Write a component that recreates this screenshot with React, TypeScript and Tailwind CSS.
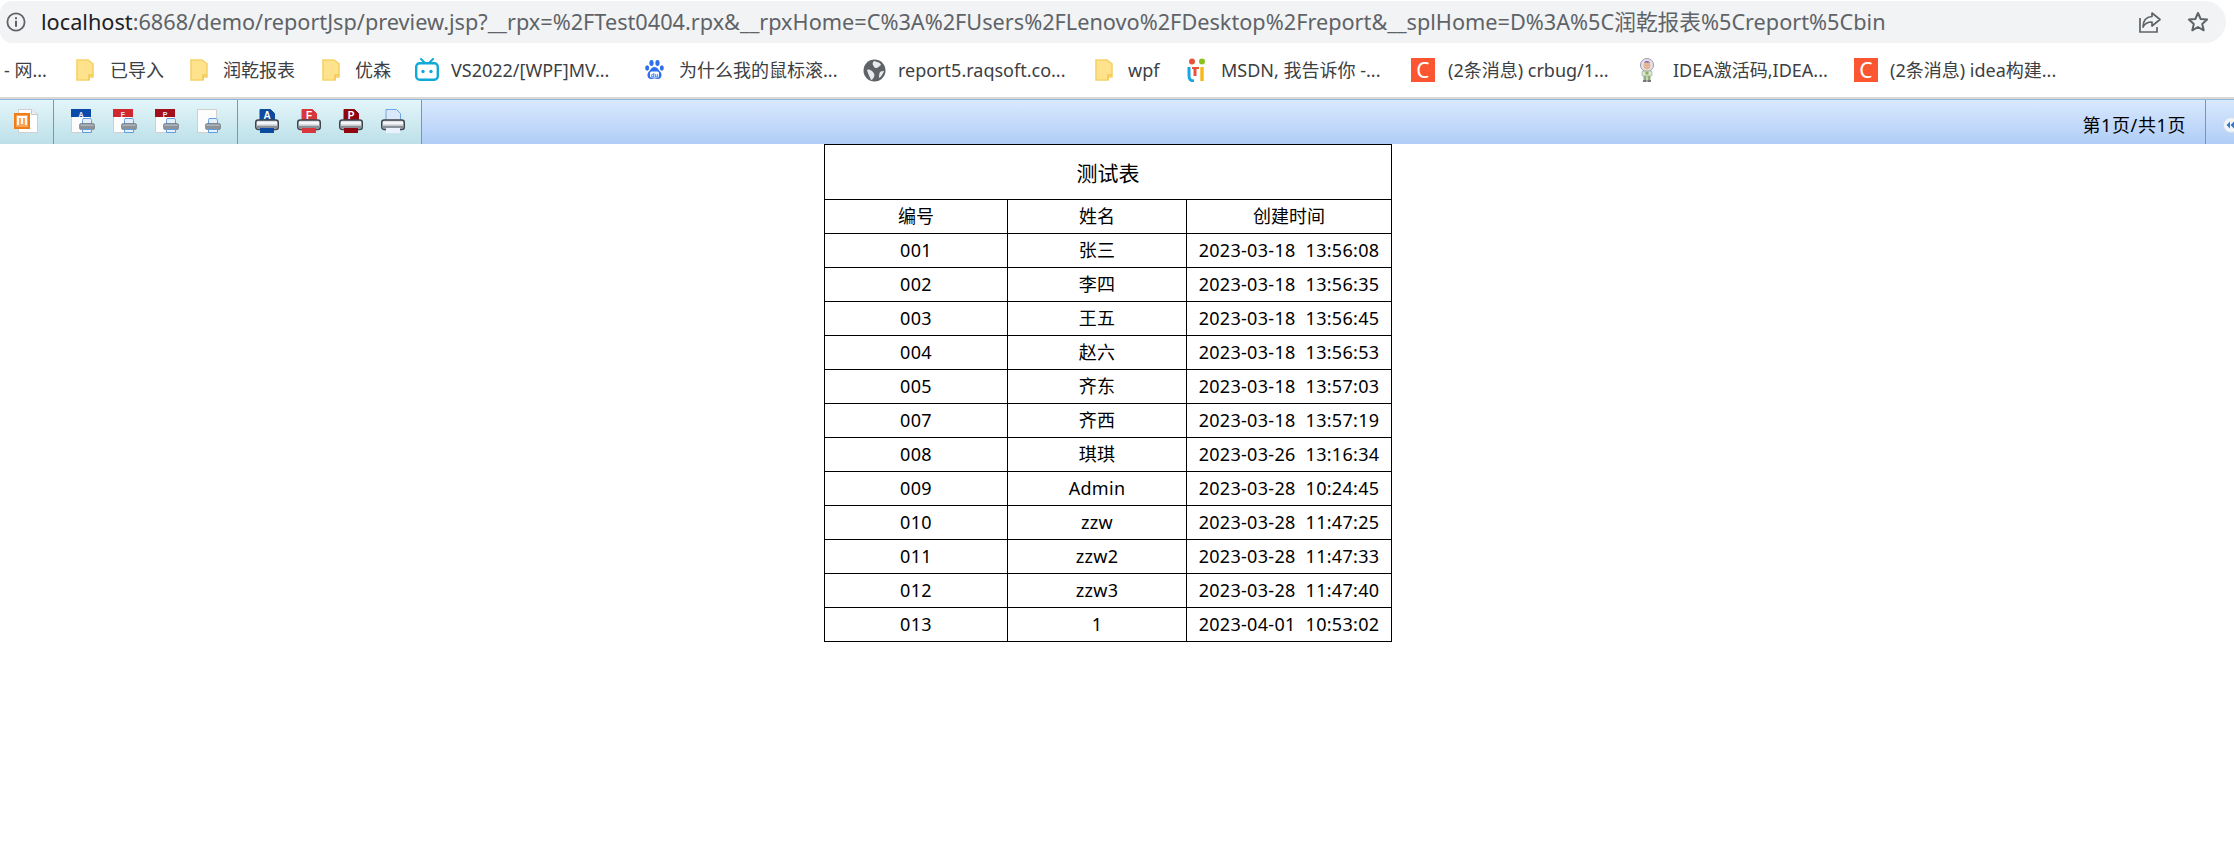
import type { ReactNode } from "react";

const sans = "font-['Noto_Sans','Noto_Sans_CJK_SC',sans-serif]";

function Folder() {
  return (
    <svg width="18" height="22" viewBox="0 0 18 22">
      <path d="M1 1h11l5 4v13h-4v3H1z" fill="#ffe38c" stroke="#f6d267" strokeWidth="1.6" />
      <path d="M13 21v-5h4" fill="none" stroke="#f1c955" strokeWidth="1.4" />
    </svg>
  );
}

function Bili() {
  return (
    <svg width="24" height="24" viewBox="0 0 24 24">
      <path d="M6 1l4 4M18 1l-4 4" stroke="#0fa9d8" strokeWidth="2" strokeLinecap="round" />
      <rect x="1.2" y="5.2" width="21.6" height="16.6" rx="3.5" fill="#fff" stroke="#0fa9d8" strokeWidth="2.4" />
      <circle cx="8" cy="13.5" r="1.7" fill="#0fa9d8" />
      <circle cx="16" cy="13.5" r="1.7" fill="#0fa9d8" />
    </svg>
  );
}

function Baidu() {
  return (
    <svg width="19" height="22" viewBox="0 0 19 22">
      <ellipse cx="6.5" cy="4" rx="2.1" ry="3" fill="#2f6fed" />
      <ellipse cx="12.5" cy="4" rx="2.1" ry="3" fill="#2f6fed" />
      <ellipse cx="2.2" cy="9" rx="2" ry="2.7" fill="#2f6fed" />
      <ellipse cx="16.8" cy="9" rx="2" ry="2.7" fill="#2f6fed" />
      <path d="M9.5 8c3 0 4 3 6 5 2 2.500 1 7-2.500 7-1.500 0-2-.5-3.500-.5S7.500 20 6 20c-3.500 0-4.500-4.500-2.500-7 2-2 3-5 6-5z" fill="#2f6fed" />
      <rect x="5" y="12.500" width="9" height="6" rx="1.500" fill="#fff" />
      <text x="9.500" y="17.800" textAnchor="middle" fontSize="6" fontWeight="700" fill="#2f6fed" fontFamily="Liberation Sans">du</text>
    </svg>
  );
}

function Globe() {
  return (
    <svg width="23" height="23" viewBox="0 0 23 23">
      <circle cx="11.500" cy="11.500" r="11" fill="#5f6368" />
      <path d="M11 2c3 1 6 1 7 4-2 1-3 3-5 3s-2-2-3-3 0-3 1-4zM4 11c2-1 4 0 6 2 1 1 2 3 1 5-1 2-2 3-3 3-1-3-3-6-4-10zM17 13c1-1 3-1 4-1-1 3-3 6-5 7 0-2 0-4 1-6z" fill="#e8eaed" />
    </svg>
  );
}

function UiLogo() {
  return (
    <svg width="20" height="24" viewBox="0 0 20 24">
      <circle cx="5" cy="3.500" r="3" fill="#e8533a" />
      <circle cx="15" cy="3.500" r="3" fill="#8cc220" />
      <path d="M2 9v9c0 3 2 5 5 5" fill="none" stroke="#1aa6e0" strokeWidth="3" />
      <path d="M8 9v9" stroke="#e8533a" strokeWidth="3" />
      <path d="M5 10h7" stroke="#e8533a" strokeWidth="2" />
      <path d="M15 9v14" stroke="#f6b818" strokeWidth="3.400" />
    </svg>
  );
}

function CLogo() {
  return (
    <span className="flex h-[24px] w-[24px] items-center justify-center bg-[#fc5531] font-['Noto_Sans',sans-serif] text-[21px] leading-none text-white">
      C
    </span>
  );
}

function Buzz() {
  return (
    <svg width="16" height="24" viewBox="0 0 16 24">
      <circle cx="8" cy="7" r="6.500" fill="#e7e3ee" stroke="#9a94a8" strokeWidth="1" />
      <ellipse cx="8" cy="7.500" rx="3.500" ry="4" fill="#e3b795" />
      <path d="M5 4.500c1-2 5-2 6 0z" fill="#8a5fa8" />
      <rect x="3" y="13" width="10" height="5" rx="1" fill="#dfe6d8" stroke="#8c9c80" strokeWidth=".6" />
      <rect x="6.500" y="13.500" width="3" height="3" fill="#7fb05a" />
      <rect x="4.500" y="18" width="3" height="5.500" fill="#8fb07a" />
      <rect x="8.500" y="18" width="3" height="5.500" fill="#8fb07a" />
      <rect x="4" y="22" width="3.500" height="2" fill="#777" />
      <rect x="8.500" y="22" width="3.500" height="2" fill="#777" />
    </svg>
  );
}

function ExcelPage() {
  return (
    <svg width="24" height="24" viewBox="0 0 24 24">
      <path d="M4.500.5h13l6 4.500v18.500h-19z" fill="#fff" stroke="#cfcfcf" />
      <path d="M17.500.5v5h6" fill="#eee" stroke="#c8c8c8" />
      <rect x="1" y="5" width="14" height="14" fill="#fba55b" stroke="#ef7d1a" strokeWidth="2" />
      <path d="M4 16v-8h8v8M8 8v7" fill="none" stroke="#fff" strokeWidth="1.800" />
    </svg>
  );
}

function SmallPrinter({ x = 8, y = 9 }: { x?: number; y?: number }) {
  return (
    <g transform={`translate(${x} ${y})`}>
      <path d="M4 .5h7c1 0 1.500 1 1.500 2V6h-9V2.500c0-1 .5-2 .5-2z" fill="#e4effb" stroke="#5d9de0" />
      <rect x=".5" y="5.500" width="15" height="6" rx="1.500" fill="#8b9299" stroke="#6d7379" strokeWidth=".6" />
      <rect x="1.500" y="6.500" width="13" height="1.500" fill="#aeb4ba" />
      <path d="M3.500 11.500h9v3h-9z" fill="#e9f2fc" stroke="#5d9de0" />
    </g>
  );
}

function DocPrint({ color, letter }: { color?: string; letter?: string }) {
  return (
    <svg width="24" height="24" viewBox="0 0 24 24">
      <path d="M.5.500h19v23H.5z" fill="#fdfdfd" stroke="#cfcfcf" />
      {color && <rect x="0" y="0" width="20" height="8" fill={color} />}
      {letter && (
        <text x="10" y="7.500" textAnchor="middle" fontSize="7" fontWeight="700" fill="#e8eef8" fontFamily="Liberation Sans">
          {letter}
        </text>
      )}
      <SmallPrinter />
    </svg>
  );
}

function BigPrinter({ color, letter, tray }: { color: string; letter?: string; tray: string }) {
  return (
    <svg width="24" height="24" viewBox="0 0 24 24">
      <path d="M5 .500h10.500l4 4V13H5z" fill={color} stroke={letter ? color : "#6ea5e4"} />
      {letter && (
        <text x="12" y="9.800" textAnchor="middle" fontSize="10" fontWeight="700" fill="#fff" fontFamily="Liberation Sans">
          {letter}
        </text>
      )}
      <rect x=".7" y="11" width="22.600" height="9.500" rx="2.500" fill="#c4c9ce" stroke="#3e444c" strokeWidth="1.400" />
      <rect x="2" y="12.500" width="20" height="3" fill="#f4f6f8" />
      <rect x="2" y="17" width="20" height="2.500" fill="#8a9098" />
      <path d="M5 19h14v5H5z" fill={tray} />
    </svg>
  );
}

const bookmarks: { icon?: ReactNode; iconBox: string; label: string; labelBox: string }[] = [
  { iconBox: "w-[4px]", label: "- 网...", labelBox: "w-[72px]" },
  { icon: <Folder />, iconBox: "w-[34px]", label: "已导入", labelBox: "w-[80px]" },
  { icon: <Folder />, iconBox: "w-[33px]", label: "润乾报表", labelBox: "w-[99px]" },
  { icon: <Folder />, iconBox: "w-[33px]", label: "优森", labelBox: "w-[60px]" },
  { icon: <Bili />, iconBox: "w-[36px]", label: "VS2022/[WPF]MV...", labelBox: "w-[194px]" },
  { icon: <Baidu />, iconBox: "w-[34px]", label: "为什么我的鼠标滚...", labelBox: "w-[184px]" },
  { icon: <Globe />, iconBox: "w-[35px]", label: "report5.raqsoft.co...", labelBox: "w-[197px]" },
  { icon: <Folder />, iconBox: "w-[33px]", label: "wpf", labelBox: "w-[59px]" },
  { icon: <UiLogo />, iconBox: "w-[34px]", label: "MSDN, 我告诉你 -...", labelBox: "w-[190px]" },
  { icon: <CLogo />, iconBox: "w-[37px]", label: "(2条消息) crbug/1...", labelBox: "w-[191px]" },
  { icon: <Buzz />, iconBox: "w-[34px]", label: "IDEA激活码,IDEA...", labelBox: "w-[181px]" },
  { icon: <CLogo />, iconBox: "w-[36px]", label: "(2条消息) idea构建...", labelBox: "w-[180px]" },
];

const rows = [
  ["001", "张三", "2023-03-18  13:56:08"],
  ["002", "李四", "2023-03-18  13:56:35"],
  ["003", "王五", "2023-03-18  13:56:45"],
  ["004", "赵六", "2023-03-18  13:56:53"],
  ["005", "齐东", "2023-03-18  13:57:03"],
  ["007", "齐西", "2023-03-18  13:57:19"],
  ["008", "琪琪", "2023-03-26  13:16:34"],
  ["009", "Admin", "2023-03-28  10:24:45"],
  ["010", "zzw", "2023-03-28  11:47:25"],
  ["011", "zzw2", "2023-03-28  11:47:33"],
  ["012", "zzw3", "2023-03-28  11:47:40"],
  ["013", "1", "2023-04-01  10:53:02"],
];

const cell = "h-[34px] border border-black p-0 pb-[1px] text-center align-middle whitespace-pre";

export default function App() {
  return (
    <div className={`h-[861px] w-[2234px] overflow-hidden bg-white ${sans}`}>
      {/* address bar */}
      <div className="mt-px flex h-[42px] w-[2226px] items-center rounded-l-[12px] rounded-r-[21px] bg-[#f1f3f4]">
        <svg className="ml-[6px] shrink-0" width="20" height="20" viewBox="0 0 20 20">
          <circle cx="10" cy="10" r="8.600" fill="none" stroke="#5f6368" strokeWidth="1.800" />
          <rect x="9" y="8.800" width="2" height="6" fill="#5f6368" />
          <rect x="9" y="5.200" width="2" height="2" fill="#5f6368" />
        </svg>
        <div className="ml-[15px] flex-1 whitespace-nowrap text-[21.7px] leading-none text-[#5f6368]">
          <span className="text-[#202124]">localhost</span>
          :6868/demo/reportJsp/preview.jsp?__rpx=%2FTest0404.rpx&amp;__rpxHome=C%3A%2FUsers%2FLenovo%2FDesktop%2Freport&amp;__splHome=D%3A%5C润乾报表%5Creport%5Cbin
        </div>
        <svg className="mr-[25px] shrink-0" width="23" height="22" viewBox="0 0 23 22" fill="none" stroke="#5f6368" strokeWidth="1.700">
          <path d="M1 7v14h17v-5" />
          <path d="M13 2l8 6.500-8 6.500v-4c-4 0-7 1-9 5 0-6 3-10 9-10.500z" strokeLinejoin="round" />
        </svg>
        <svg className="mr-[17px] shrink-0" width="22" height="22" viewBox="0 0 22 22" fill="none" stroke="#5f6368" strokeWidth="2">
          <path d="M11 2l2.700 6 6.400.6-4.900 4.300 1.500 6.400L11 16l-5.700 3.300 1.500-6.400L1.900 8.600 8.300 8z" strokeLinejoin="round" />
        </svg>
      </div>

      {/* bookmarks */}
      <div className="flex h-[54px] items-center whitespace-nowrap text-[18px] leading-none text-[#3c4043]">
        {bookmarks.map((b, i) => (
          <div key={i} className="flex shrink-0 items-center">
            <span className={`flex shrink-0 items-center ${b.iconBox}`}>{b.icon}</span>
            <span className={`shrink-0 ${b.labelBox}`}>{b.label}</span>
          </div>
        ))}
      </div>

      {/* report toolbar */}
      <div className="h-[2px] bg-[#d9d9d9]" />
      <div className="flex h-[45px] border-t border-[#8fb8d8] bg-gradient-to-b from-[#d9e9fe] to-[#b0cdf6]">
        <div className="flex items-center bg-gradient-to-b from-[#e3f6fa] to-[#bce0e8]">
          <div className="flex h-full items-center border-r border-[#7097c4] pb-[2px] pl-[14px] pr-[15px]">
            <ExcelPage />
          </div>
          <div className="flex h-full items-center gap-[18px] border-r border-[#7097c4] pb-[2px] pl-[17px] pr-[16px]">
            <DocPrint color="#0b4aa8" letter="A" />
            <DocPrint color="#d0282e" letter="F" />
            <DocPrint color="#a30f1c" letter="P" />
            <DocPrint />
          </div>
          <div className="flex h-full items-center gap-[18px] border-r border-[#7097c4] pb-[2px] pl-[17px] pr-[16px]">
            <BigPrinter color="#0b4a9e" letter="A" tray="#0b4a9e" />
            <BigPrinter color="#d8383c" letter="F" tray="#d8383c" />
            <BigPrinter color="#8f0610" letter="P" tray="#8f0610" />
            <BigPrinter color="#dbe8f9" tray="#e8f1fc" />
          </div>
        </div>
        <div className="flex-1" />
        <div className="flex items-center pr-[19px] pt-[6px] text-[18px] leading-none tracking-[0.6px] text-black">第1页/共1页</div>
        <div className="flex h-full w-[29px] items-center border-l border-[#7097c4] pl-[17px]">
          <svg className="mt-[6px] shrink-0" width="16" height="16" viewBox="0 0 16 16">
            <circle cx="8" cy="8" r="7.500" fill="#f2f6fb" stroke="#cfdcec" />
            <path d="M7 4.500L3.500 8 7 11.500zM11 4.500L7.500 8l3.500 3.500z" fill="#3b78c4" />
          </svg>
        </div>
      </div>

      {/* report */}
      <table className="ml-[824px] w-[567px] table-fixed border-collapse text-[18px] leading-none tracking-[0.3px] text-black">
        <colgroup>
          <col className="w-[183px]" />
          <col className="w-[179px]" />
          <col className="w-[205px]" />
        </colgroup>
        <tbody>
          <tr>
            <td colSpan={3} className="h-[55px] border border-black p-0 pt-[2px] text-center align-middle text-[21px] tracking-normal">
              测试表
            </td>
          </tr>
          <tr>
            <td className={`${cell} tracking-normal`}>编号</td>
            <td className={`${cell} tracking-normal`}>姓名</td>
            <td className={`${cell} tracking-normal`}>创建时间</td>
          </tr>
          {rows.map((r) => (
            <tr key={r[0]}>
              <td className={cell}>{r[0]}</td>
              <td className={cell}>{r[1]}</td>
              <td className={cell}>{r[2]}</td>
            </tr>
          ))}
        </tbody>
      </table>
    </div>
  );
}
